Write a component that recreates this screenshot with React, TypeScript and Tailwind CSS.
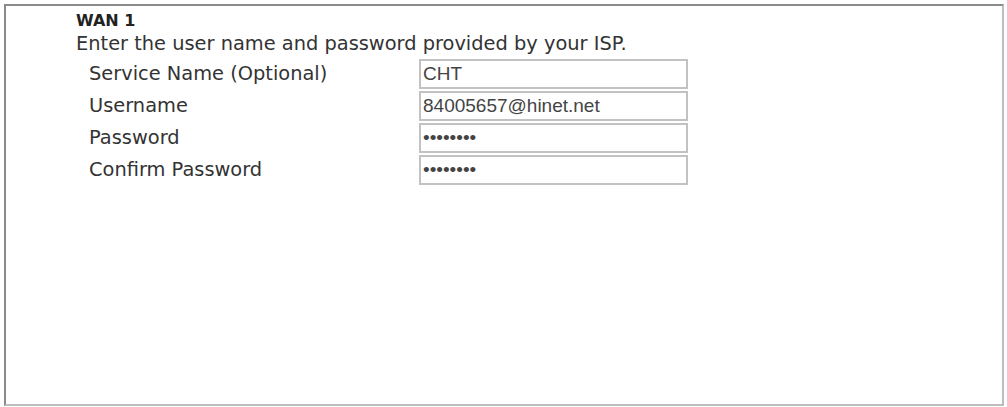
import React from 'react';

const rows = [
  { label: 'Service Name (Optional)', value: 'CHT', type: 'text' },
  { label: 'Username', value: '84005657@hinet.net', type: 'text' },
  { label: 'Password', value: '12345678', type: 'password' },
  { label: 'Confirm Password', value: '12345678', type: 'password' },
];

const App: React.FC = () => {
  return (
    <div className="w-[1007px] h-[407px] bg-white p-[4px] font-['DejaVu_Sans',sans-serif] text-[#333]">
      <div className="h-[402px] w-[1000px] border-2 border-t-[#8a8a8a] border-l-[#8a8a8a] border-r-[#bdbdbd] border-b-[#bdbdbd] pl-[70px] pt-[5px]">
        <div className="text-[16px] font-bold leading-[20px] text-[#222]">WAN 1</div>
        <div className="mt-[2px] text-[19.4px] leading-[22px]">Enter the user name and password provided by your ISP.</div>
        <div className="mt-[4px] ml-[13px] flex flex-col gap-[2px]">
          {rows.map((r) => (
            <div key={r.label} className="flex items-center h-[30px]">
              <div className="w-[330px] text-[19.4px]">{r.label}</div>
              <input
                type={r.type}
                defaultValue={r.value}
                readOnly
                className="w-[269px] h-[30px] border-2 border-[#c2c2c2] bg-white px-[2px] text-[19px] text-[#444] font-['Liberation_Sans',Arial,sans-serif] outline-none"
              />
            </div>
          ))}
        </div>
      </div>
    </div>
  );
};

export default App;
